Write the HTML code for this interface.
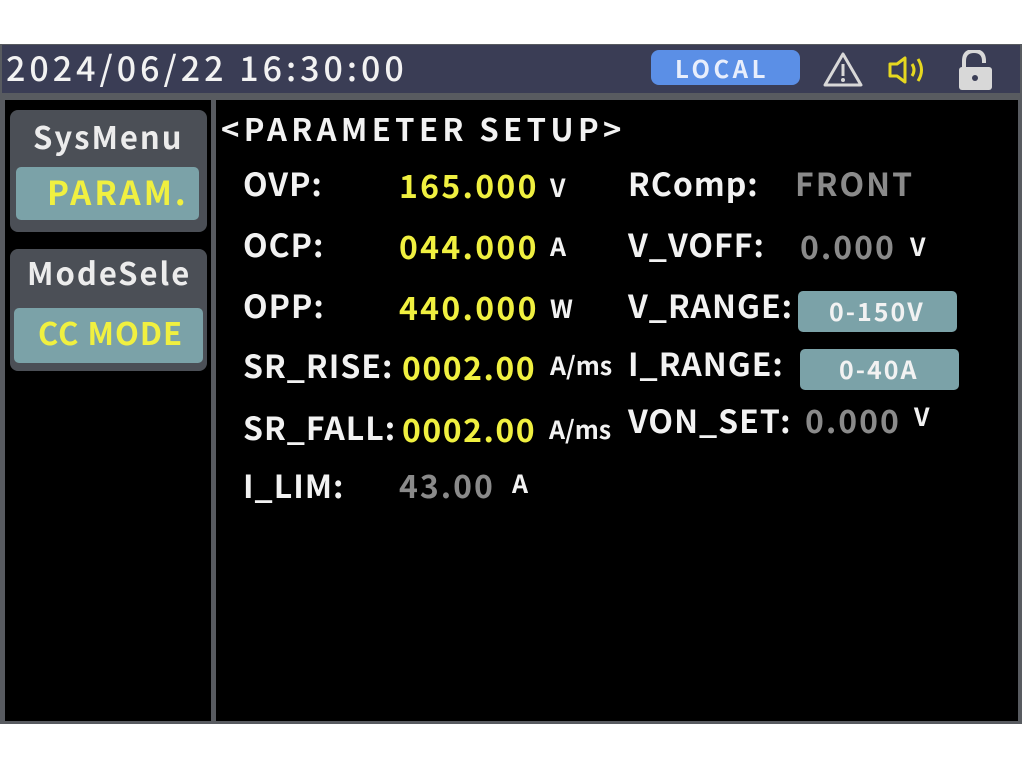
<!DOCTYPE html>
<html><head><meta charset="utf-8"><style>
*{margin:0;padding:0;box-sizing:border-box}
body{width:1024px;height:768px;background:#fff;position:relative;overflow:hidden;font-family:"Noto Sans CJK SC","Liberation Sans",sans-serif;font-weight:700}
.a{position:absolute;white-space:nowrap;line-height:32px;font-size:32px;letter-spacing:1px}
.w{color:#f2f2f2}.y{color:#f0f040;letter-spacing:2.3px}.g{color:#8a8a8a;letter-spacing:2px}
.u{position:absolute;white-space:nowrap;font-size:25px;line-height:32px;color:#f2f2f2}
.box{position:absolute;border-radius:5px}
</style></head><body>
<div style="position:absolute;left:0;top:44px;width:1022px;height:680px;background:#585b60"></div>
<div style="position:absolute;left:2px;top:45px;width:1018px;height:48px;background:#3a3d55"></div>
<div style="position:absolute;left:5px;top:100px;width:206px;height:621px;background:#000"></div>
<div style="position:absolute;left:216px;top:100px;width:802px;height:621px;background:#000"></div>
<div class="a w" style="left:6px;top:51px;font-size:34px;letter-spacing:4px;font-weight:500">2024/06/22 16:30:00</div>
<div class="box" style="left:651px;top:50px;width:149px;height:35px;background:#5b8fe6;border-radius:8px"></div>
<div class="a w" style="left:675px;top:52px;font-size:24px;letter-spacing:3.5px;color:#e8eefc">LOCAL</div>
<svg style="position:absolute;left:820px;top:50px" width="190" height="42">
<path d="M23 4 L41 35 L5 35 Z" fill="none" stroke="#d8d8d8" stroke-width="3" stroke-linejoin="round"/>
<rect x="21.5" y="14" width="3" height="12" fill="#d8d8d8"/><circle cx="23" cy="30" r="2" fill="#d8d8d8"/>
<path d="M70 14 L77 14 L85 8 L85 32 L77 26 L70 26 Z" fill="none" stroke="#e6d820" stroke-width="3" stroke-linejoin="round"/>
<path d="M92 14 Q96 20 92 26" fill="none" stroke="#e6d820" stroke-width="3"/>
<path d="M98 9 Q105 20 98 31" fill="none" stroke="#e6d820" stroke-width="3"/>
<path d="M144 19 L144 11 Q144 1 154 1 Q164 1 164 11 L164 13" fill="none" stroke="#d8d8d8" stroke-width="4"/>
<rect x="139" y="17" width="33" height="23" rx="3" fill="#d8d8d8"/><circle cx="155" cy="28" r="3" fill="#3a3d55"/>
</svg>
<div class="box" style="left:10px;top:110px;width:197px;height:122px;background:#4b4f56;border-radius:8px"></div>
<div class="box" style="left:16px;top:167px;width:183px;height:53px;background:#7ba2a8"></div>
<div class="a w" style="left:33px;top:120px;font-size:31px;letter-spacing:2px;color:#ececec">SysMenu</div>
<div class="a y" style="left:47px;top:175px;font-size:33px;letter-spacing:3px">PARAM.</div>
<div class="box" style="left:10px;top:249px;width:197px;height:122px;background:#4b4f56;border-radius:8px"></div>
<div class="box" style="left:14px;top:308px;width:189px;height:55px;background:#7ba2a8"></div>
<div class="a w" style="left:27px;top:256px;font-size:31px;letter-spacing:2px;color:#ececec">ModeSele</div>
<div class="a y" style="left:38px;top:316px;font-size:31px;letter-spacing:1px">CC MODE</div>
<div class="a w" style="left:221px;top:112px;font-size:31px;letter-spacing:4.4px">&lt;PARAMETER SETUP&gt;</div>
<div class="a w" style="left:243px;top:167px">OVP:</div>
<div class="a y" style="left:399px;top:169px">165.000</div><div class="u" style="left:550px;top:171px">V</div>
<div class="a w" style="left:243px;top:228px">OCP:</div>
<div class="a y" style="left:399px;top:230px">044.000</div><div class="u" style="left:550px;top:230px">A</div>
<div class="a w" style="left:243px;top:289px">OPP:</div>
<div class="a y" style="left:399px;top:291px">440.000</div><div class="u" style="left:550px;top:292px">W</div>
<div class="a w" style="left:243px;top:349px">SR_RISE:</div>
<div class="a y" style="left:402px;top:351px;letter-spacing:1.5px">0002.00</div><div class="u" style="left:550px;top:349px">A/ms</div>
<div class="a w" style="left:243px;top:411px">SR_FALL:</div>
<div class="a y" style="left:402px;top:413px;letter-spacing:1.5px">0002.00</div><div class="u" style="left:549px;top:413px">A/ms</div>
<div class="a w" style="left:243px;top:469px">I_LIM:</div>
<div class="a g" style="left:399px;top:469px">43.00</div><div class="u" style="left:512px;top:467px">A</div>
<div class="a w" style="left:628px;top:167px">RComp:</div>
<div class="a g" style="left:795px;top:167px">FRONT</div>
<div class="a w" style="left:628px;top:228px">V_VOFF:</div>
<div class="a g" style="left:800px;top:230px">0.000</div><div class="u" style="left:910px;top:230px">V</div>
<div class="a w" style="left:628px;top:289px">V_RANGE:</div>
<div class="box" style="left:798px;top:291px;width:159px;height:41px;background:#7ba2a8"></div>
<div class="a w" style="left:829px;top:295px;font-size:25px;letter-spacing:2px">0-150V</div>
<div class="a w" style="left:628px;top:347px">I_RANGE:</div>
<div class="box" style="left:800px;top:349px;width:159px;height:41px;background:#7ba2a8"></div>
<div class="a w" style="left:839px;top:353px;font-size:25px;letter-spacing:2px">0-40A</div>
<div class="a w" style="left:628px;top:404px">VON_SET:</div>
<div class="a g" style="left:805px;top:404px">0.000</div><div class="u" style="left:914px;top:400px">V</div>
</body></html>
